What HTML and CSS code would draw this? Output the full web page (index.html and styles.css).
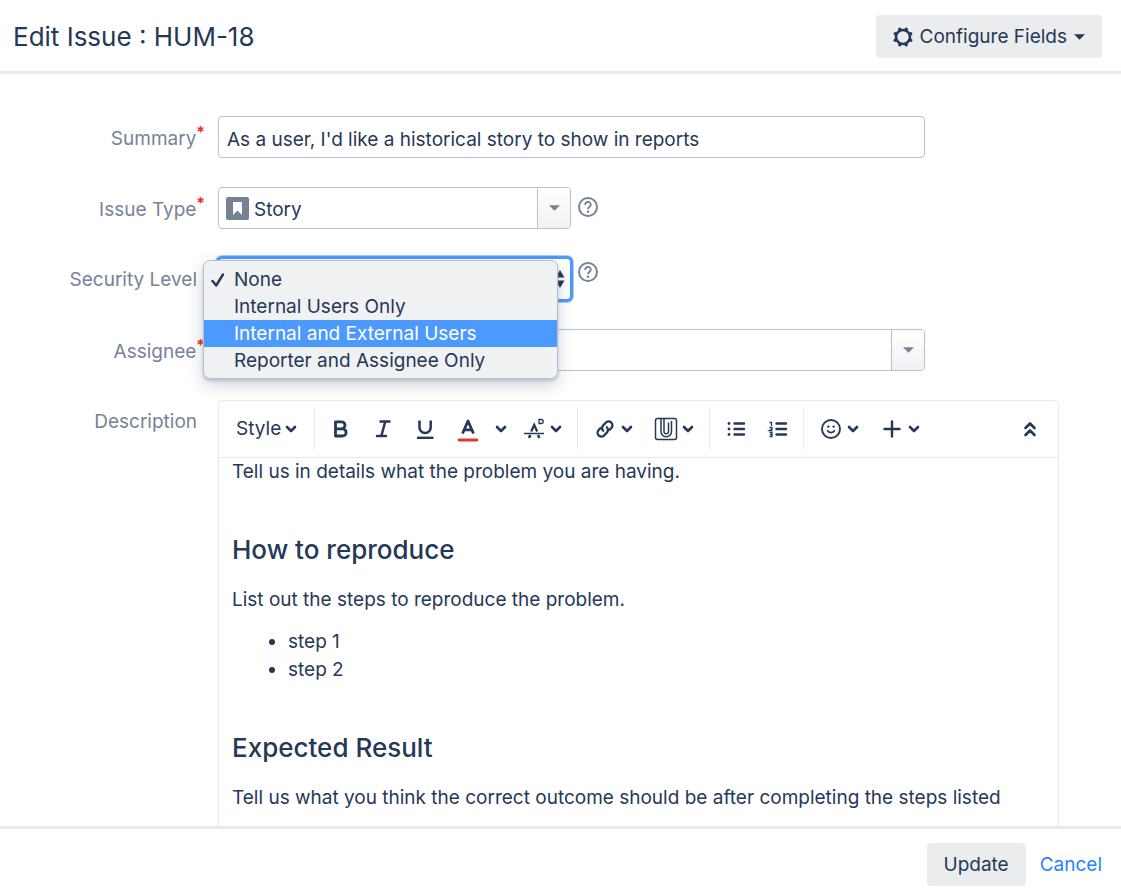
FILE: index.html
```html
<!DOCTYPE html>
<html lang="en">
<head>
<meta charset="utf-8">
<meta name="viewport" content="width=device-width, initial-scale=1">
<title>Edit Issue : HUM-18</title>
<link rel="stylesheet" href="styles.css">
</head>
<body class="dialog">
<svg class="sprite" aria-hidden="true">
  <symbol id="chevron" viewBox="0 0 16 16"><path d="M4 6l4 4 4-4" fill="none" stroke="currentColor" stroke-width="2.6" stroke-linecap="round" stroke-linejoin="round"/></symbol>
  <symbol id="caret" viewBox="0 0 12 6"><path d="M0 0h12L6 6z" fill="currentColor"/></symbol>
  <symbol id="help" viewBox="0 0 20 20"><circle cx="10" cy="10" r="9" fill="none" stroke="currentColor" stroke-width="2"/><path d="M7.200 8V7.600a2.800 2.600 0 1 1 4.500 2C10.500 10.400 10 10.800 10 12.200" fill="none" stroke="currentColor" stroke-width="1.900"/><circle cx="10" cy="14.800" r="1.200" fill="currentColor"/></symbol>
</svg>

<header class="dialog-header">
  <h1 class="dialog-title">Edit Issue : HUM-18</h1>
  <button class="button configure" type="button">
    <svg class="gear" viewBox="0 0 20 20" aria-hidden="true"><circle cx="10" cy="10" r="7" fill="none" stroke="currentColor" stroke-width="2.600"/><g fill="currentColor"><circle cx="13.200" cy="2.300" r="1.700"/><circle cx="17.700" cy="6.800" r="1.700"/><circle cx="17.700" cy="13.200" r="1.700"/><circle cx="13.200" cy="17.700" r="1.700"/><circle cx="6.800" cy="17.700" r="1.700"/><circle cx="2.300" cy="13.200" r="1.700"/><circle cx="2.300" cy="6.800" r="1.700"/><circle cx="6.800" cy="2.300" r="1.700"/></g></svg>
    Configure Fields
    <svg class="configure-caret" aria-hidden="true"><use href="#caret"/></svg>
  </button>
</header>

<main class="dialog-body">
  <form class="form" id="edit-form">
    <label class="label" for="summary">Summary<span class="required">*</span></label>
    <div class="field">
      <input class="control control-wide" id="summary" type="text" value="As a user, I'd like a historical story to show in reports">
    </div>

    <label class="label" for="type">Issue Type<span class="required">*</span></label>
    <div class="field">
      <div class="picker picker-narrow">
        <svg class="story" viewBox="0 0 23 23" aria-hidden="true"><rect width="23" height="23" rx="2" fill="#758195"/><path d="M7 5h9v13l-4.500-4.500L7 18z" fill="#fff"/></svg>
        <select class="control picker-select with-icon" id="type"><option>Story</option></select>
        <span class="picker-arrow"><svg class="caret" aria-hidden="true"><use href="#caret"/></svg></span>
      </div>
      <button class="help" type="button" aria-label="Issue type help"><svg class="help-icon"><use href="#help"/></svg></button>
    </div>

    <label class="label" for="security">Security Level</label>
    <div class="field">
      <select class="control security" id="security"><option>None</option></select>
      <svg class="stepper" viewBox="0 0 10 18" aria-hidden="true"><path d="M5 0l4.500 7.500h-9zM5 18l4.500-7.500h-9z" fill="currentColor"/></svg>
      <button class="help" type="button" aria-label="Security level help"><svg class="help-icon"><use href="#help"/></svg></button>
      <div class="menu">
        <button class="menu-item" type="button"><svg class="check" viewBox="0 0 14 14" aria-hidden="true"><path d="M1.500 8l3.700 4.500L12 1.500" fill="none" stroke="currentColor" stroke-width="2.400" stroke-linecap="round" stroke-linejoin="round"/></svg>None</button>
        <button class="menu-item" type="button">Internal Users Only</button>
        <button class="menu-item active" type="button">Internal and External Users</button>
        <button class="menu-item" type="button">Reporter and Assignee Only</button>
      </div>
    </div>

    <label class="label" for="assignee">Assignee<span class="required">*</span></label>
    <div class="field">
      <div class="picker picker-wide">
        <select class="control picker-select" id="assignee"><option></option></select>
        <span class="picker-arrow"><svg class="caret" aria-hidden="true"><use href="#caret"/></svg></span>
      </div>
    </div>

    <span class="label" id="description-label">Description</span>
    <div class="editor">
      <div class="toolbar" role="toolbar" aria-label="Formatting">
        <div class="group">
          <button class="tool tool-style" type="button">Style<svg class="chevron"><use href="#chevron"/></svg></button>
        </div>
        <div class="group">
          <button class="tool tool-single" type="button" aria-label="Bold"><svg class="icon" viewBox="0 0 24 24"><path d="M6.500 4.800h6a3.400 3.400 0 0 1 0 7h-6zM6.500 11.800h7a3.600 3.600 0 0 1 0 7.200h-7z" fill="none" stroke="currentColor" stroke-width="2.800" stroke-linejoin="round"/></svg></button>
          <button class="tool tool-single" type="button" aria-label="Italic"><svg class="icon" viewBox="0 0 24 24"><path d="M9.500 4.500h9M6 19h9M14.300 4.500L10.300 19" fill="none" stroke="currentColor" stroke-width="2.500" stroke-linecap="round"/></svg></button>
          <button class="tool tool-single" type="button" aria-label="Underline"><svg class="icon" viewBox="0 0 24 24"><path d="M6.500 3.500v7a5.600 5.600 0 0 0 11.200 0v-7" fill="none" stroke="currentColor" stroke-width="2.500"/><path d="M4 20.800h16.500" stroke="currentColor" stroke-width="2.400"/></svg></button>
          <button class="tool tool-single" type="button" aria-label="Text color"><svg class="icon" viewBox="0 0 24 24"><path d="M7.500 16.500L13 4l5.500 12.500M9.500 12.800h7" fill="none" stroke="currentColor" stroke-width="2.800" stroke-linejoin="round"/><path d="M4 23h18" stroke="#e5342b" stroke-width="2.800" stroke-linecap="round"/></svg></button>
          <button class="tool tool-chevron" type="button" aria-label="More colors"><svg class="chevron"><use href="#chevron"/></svg></button>
          <button class="tool tool-tight" type="button" aria-label="More formatting"><svg class="icon" viewBox="0 0 24 24"><path d="M0 16.500h20" stroke="currentColor" stroke-width="1.500"/><path d="M7.200 14.500L10.200 8l3 6.500" fill="none" stroke="currentColor" stroke-width="2.300"/><path d="M6.300 18l-1.300 3M14 18l1.300 3" stroke="currentColor" stroke-width="2.500"/><path d="M15 2.500h2.200a1.900 1.900 0 0 1 0 4H15z" fill="none" stroke="currentColor" stroke-width="1.300"/></svg><svg class="chevron"><use href="#chevron"/></svg></button>
        </div>
        <div class="group">
          <button class="tool" type="button" aria-label="Link"><svg class="icon" viewBox="0 0 24 24"><g fill="none" stroke="currentColor" stroke-width="2.300" stroke-linecap="round"><path d="M10.200 13.800a3.800 3.800 0 0 1 0-5.400l2.500-2.600a3.800 3.800 0 0 1 5.800 5l-1.800 2"/><path d="M13.800 10.200a3.800 3.800 0 0 1 0 5.400l-2.500 2.600a3.800 3.800 0 0 1-5.800-5l1.800-2"/></g></svg><svg class="chevron"><use href="#chevron"/></svg></button>
          <button class="tool" type="button" aria-label="Attachment"><svg class="icon" viewBox="0 0 24 24"><g fill="none" stroke="currentColor" stroke-width="1.500"><rect x="1.500" y="1.500" width="21" height="21" rx="2"/><path d="M7 2v12.500a5 5 0 0 0 10.500 0V5.500M14.500 5.500v9a2.200 2.200 0 0 1-4.500 0V2M17.500 5.500v-1.500M10 10V2"/></g></svg><svg class="chevron"><use href="#chevron"/></svg></button>
        </div>
        <div class="group">
          <button class="tool tool-single" type="button" aria-label="Bullet list"><svg class="icon" viewBox="0 0 24 24"><path d="M10.500 6.500h9.500M10.500 12h9.500M10.500 17.500h9.500" stroke="currentColor" stroke-width="2.400" stroke-linecap="round"/><g fill="currentColor"><circle cx="5" cy="6.500" r="1.400"/><circle cx="5" cy="12" r="1.400"/><circle cx="5" cy="17.500" r="1.400"/></g></svg></button>
          <button class="tool tool-single" type="button" aria-label="Numbered list"><svg class="icon" viewBox="0 0 24 24"><path d="M10.500 6.500h9.500M10.500 12h9.500M10.500 17.500h9.500" stroke="currentColor" stroke-width="2.400" stroke-linecap="round"/><path d="M3.500 5.500h2V9M3.500 10.500h2.500v1.500l-2.500 1.500h3M3.500 15.500h2.500v4h-2.500M4 17.500h2" fill="none" stroke="currentColor" stroke-width="1.300"/></svg></button>
        </div>
        <div class="group">
          <button class="tool" type="button" aria-label="Emoji"><svg class="icon" viewBox="0 0 24 24"><circle cx="12" cy="12" r="9" fill="none" stroke="currentColor" stroke-width="1.900"/><circle cx="9.300" cy="9.600" r="1.200" fill="currentColor"/><circle cx="14.700" cy="9.600" r="1.200" fill="currentColor"/><path d="M8.500 13.700c1.300 2.600 5.700 2.600 7 0" fill="none" stroke="currentColor" stroke-width="1.700" stroke-linecap="round"/></svg><svg class="chevron"><use href="#chevron"/></svg></button>
          <button class="tool" type="button" aria-label="Insert more"><svg class="icon" viewBox="0 0 24 24"><path d="M12 4.500v15M4.500 12h15" stroke="currentColor" stroke-width="2.400" stroke-linecap="round"/></svg><svg class="chevron"><use href="#chevron"/></svg></button>
        </div>
        <button class="tool tool-collapse" type="button" aria-label="Collapse toolbar"><svg class="icon" viewBox="0 0 24 24"><path d="M7.500 11l4.500-4.500 4.500 4.500M7.500 18l4.500-4.500 4.500 4.500" fill="none" stroke="currentColor" stroke-width="2.600" stroke-linecap="round" stroke-linejoin="round"/></svg></button>
      </div>
      <div class="content" contenteditable="true" role="textbox" aria-multiline="true" aria-labelledby="description-label" spellcheck="false">
        <p>Tell us in details what the problem you are having.</p>
        <h2>How to reproduce</h2>
        <p>List out the steps to reproduce the problem.</p>
        <ul><li>step 1</li><li>step 2</li></ul>
        <h2>Expected Result</h2>
        <p>Tell us what you think the correct outcome should be after completing the steps listed</p>
      </div>
    </div>
  </form>
</main>

<footer class="dialog-footer">
  <button class="button" type="submit" form="edit-form">Update</button>
  <a class="cancel" href="#">Cancel</a>
</footer>
</body>
</html>
```
FILE: styles.css
```css
* { box-sizing: border-box; }

.dialog {
  --text: #253858;
  --muted: #758399;
  --line: #b8c0ce;
  --rule: #e8eaed;
  margin: 0;
  height: 100vh;
  display: flex;
  flex-direction: column;
  background: #fff;
  color: var(--text);
  font: 19px/28px Inter, "Liberation Sans", sans-serif;
}

.sprite { display: none; }
button, input, select { font: inherit; color: inherit; }
button { border: 0; background: none; cursor: pointer; }
svg { flex: none; }

.dialog-header {
  display: flex;
  align-items: center;
  justify-content: space-between;
  padding: 15px 19px 13px 13px;
  border-bottom: 3px solid var(--rule);
}
.dialog-title { margin: 0; font-size: 26px; line-height: 34px; font-weight: 400; }

.button {
  height: 43px;
  padding: 1px 17px 0;
  border-radius: 4px;
  background: #ebecee;
}
.configure { display: flex; align-items: center; gap: 7px; }
.gear { width: 20px; height: 20px; }
.configure-caret { width: 11px; height: 6px; }

.dialog-body {
  flex: 1;
  min-height: 0;
  overflow: hidden;
  padding: 42px 62px 0 0;
}
.form {
  display: grid;
  grid-template-columns: 218px minmax(0, 1fr);
  row-gap: 29px;
}
.label {
  padding: 8px 21px 0 0;
  text-align: right;
  color: var(--muted);
}
.required {
  margin-right: -8px;
  color: #f0281e;
  font-size: 16px;
  line-height: 16px;
  font-weight: 600;
  vertical-align: 7px;
}

.field {
  position: relative;
  display: flex;
  align-items: flex-start;
  gap: 7px;
}
.control {
  height: 42px;
  border: 1px solid var(--line);
  border-radius: 4px;
  padding: 4px 8px 0;
  background: #fff;
  outline: 0;
  appearance: none;
}
.control-wide { width: 100%; max-width: 707px; }

.picker { position: relative; display: flex; width: 100%; }
.picker-narrow { max-width: 353px; }
.picker-wide { max-width: 707px; }
.picker-select { width: 100%; padding-right: 42px; }
.with-icon { padding-left: 35px; }
.story { position: absolute; left: 8px; top: 10px; width: 23px; height: 23px; }
.picker-arrow {
  position: absolute;
  inset: 1px 1px 1px auto;
  width: 33px;
  display: flex;
  align-items: center;
  justify-content: center;
  border-left: 1px solid var(--line);
  border-radius: 0 3px 3px 0;
  background: linear-gradient(#fff, #f0f1f3);
  color: var(--muted);
  pointer-events: none;
}
.caret { width: 11px; height: 6px; }

.help { margin-top: 10px; padding: 0; color: var(--muted); display: flex; }
.security ~ .help { margin-top: 4px; }
.help-icon { width: 20px; height: 20px; }

.security {
  width: 100%;
  max-width: 353px;
  border-color: #4c9aff;
  box-shadow: 0 0 0 2px #4c9aff, 0 0 0 3px #b8c9e3;
}
.stepper {
  position: absolute;
  left: 337px;
  top: 12px;
  width: 10px;
  height: 18px;
}

.menu {
  position: absolute;
  z-index: 2;
  left: -15px;
  top: 2px;
  width: 355px;
  padding: 5px 0 4px;
  border: 1px solid #b9bfcb;
  border-radius: 7px;
  background: #f0f1f3;
  box-shadow: 0 2px 3px #9ba5b788, 0 6px 16px #25385838;
}
.menu-item {
  display: block;
  position: relative;
  width: 100%;
  height: 27px;
  padding: 0 0 0 30px;
  text-align: left;
  line-height: 27px;
}
.active { background: #4c9aff; color: #fff; }
.check { position: absolute; left: 7px; top: 7px; width: 14px; height: 14px; }

.editor {
  min-width: 0;
  border: 1px solid var(--rule);
  border-radius: 4px;
}
.toolbar {
  display: flex;
  align-items: center;
  height: 57px;
  border-bottom: 1px solid var(--rule);
}
.group {
  display: flex;
  height: 42px;
  padding: 0 4px 0 5px;
  border-right: 1px solid var(--rule);
}
.group:nth-last-child(2) { border-right: 0; }
.tool {
  display: flex;
  align-items: center;
  justify-content: center;
  gap: 2px;
  padding: 0 9px 0 10px;
}
.tool-single { width: 42px; padding: 0; }
.tool-style { padding: 0 11px 0 12px; }
.tool-chevron { width: 26px; padding: 0; }
.tool-tight { gap: 0; }
.tool-collapse { margin-left: auto; padding: 0 16px; }
.icon { width: 24px; height: 24px; overflow: visible; }
.chevron { width: 16px; height: 16px; }

.content { padding: 0 13px 48px; outline: 0; }
.content p { margin: 0; }
.content h2 {
  margin: 48px 0 20px;
  font-size: 26px;
  line-height: 32px;
  font-weight: 500;
}
.content ul { margin: 14px 0 0; padding-left: 56px; }

.dialog-footer {
  display: flex;
  align-items: center;
  justify-content: flex-end;
  gap: 14px;
  padding: 14px 19px 8px;
  border-top: 3px solid var(--rule);
}
.cancel { color: #2684ff; text-decoration: none; }
```
